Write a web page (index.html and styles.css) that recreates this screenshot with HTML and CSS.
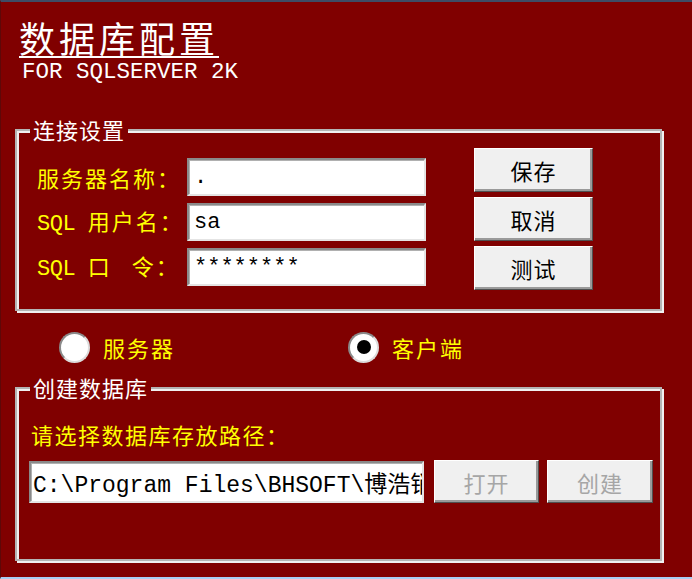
FILE: index.html
```html
<!DOCTYPE html>
<html lang="zh-CN">
<head>
<meta charset="utf-8">
<title>数据库配置</title>
<link rel="stylesheet" href="styles.css">
</head>
<body>
<div class="window">
  <header class="head">
    <h1 class="title">数据库配置</h1>
    <div class="subtitle">FOR SQLSERVER 2K</div>
  </header>

  <section class="group group-conn">
    <span class="legend legend-conn">连接设置</span>
    <div class="conn-body">
      <div class="fields">
        <div class="field-row">
          <label class="label">服务器名称：</label>
          <input class="edit" type="text" value="." readonly>
        </div>
        <div class="field-row">
          <label class="label"><span class="mono">SQL </span>用户名：</label>
          <input class="edit" type="text" value="sa" readonly>
        </div>
        <div class="field-row">
          <label class="label"><span class="mono">SQL </span>口<span class="gap"></span>令：</label>
          <input class="edit" type="text" value="********" readonly>
        </div>
      </div>
      <div class="buttons">
        <button class="btn">保存</button>
        <button class="btn">取消</button>
        <button class="btn">测试</button>
      </div>
    </div>
  </section>

  <div class="radios">
    <div class="radio radio-server">
      <span class="radio-dot"></span>
      <span class="radio-label">服务器</span>
    </div>
    <div class="radio radio-client">
      <span class="radio-dot checked"></span>
      <span class="radio-label">客户端</span>
    </div>
  </div>

  <section class="group group-db">
    <span class="legend legend-db">创建数据库</span>
    <div class="path-label">请选择数据库存放路径：</div>
    <div class="path-row">
      <input class="edit path-edit" type="text" value="C:\Program Files\BHSOFT\博浩销售管理系统\Data" readonly>
      <button class="btn btn-small" disabled>打开</button>
      <button class="btn btn-small btn-create" disabled>创建</button>
    </div>
  </section>
</div>
</body>
</html>
```

FILE: styles.css
```css
html, body {
  margin: 0;
  padding: 0;
  background: #800000;
}

body {
  width: 692px;
  height: 579px;
  overflow: hidden;
  font-family: "Noto Sans CJK SC", "Noto Sans", sans-serif;
}

.window {
  box-sizing: border-box;
  width: 692px;
  height: 579px;
  background: #800000;
  border-top: 2px solid #3e4c66;
  border-bottom: 2px solid #a8cdf2;
  border-left: 1px solid #5e0808;
}

/* header */
.head {
  padding: 21px 0 0 18px;
  color: #fff;
}

.title {
  margin: 0;
  font-family: "Liberation Sans", "Noto Sans CJK SC", sans-serif;
  font-size: 36px;
  line-height: 36px;
  font-weight: 400;
  letter-spacing: 4px;
  text-decoration: underline;
  text-decoration-thickness: 2px;
  text-underline-offset: 3px;
}

.subtitle {
  font-family: "Liberation Mono", monospace;
  font-size: 22.5px;
  line-height: 22px;
  margin-left: 3px;
  margin-top: 2px;
}

/* group boxes */
.group {
  position: relative;
  box-sizing: border-box;
  margin-left: 14px;
  width: 647px;
  border: 2px solid #b4b4b4;
  box-shadow: 2px 2px 0 #f0f0f0, inset 2px 2px 0 #f0f0f0;
}

.legend {
  position: absolute;
  left: 13px;
  top: -15px;
  padding: 0 3px;
  background: #800000;
  color: #fff;
  font-size: 22px;
  line-height: 26px;
}

.legend-conn { letter-spacing: 1px; }
.legend-db { letter-spacing: 1px; }

.group-conn {
  margin-top: 46px;
  height: 182px;
  padding: 17px 0 0 20px;
}

.conn-body {
  display: flex;
  align-items: flex-start;
}

.fields {
  display: flex;
  flex-direction: column;
  gap: 7px;
  padding-top: 10px;
}

.field-row {
  display: flex;
  align-items: center;
  height: 38px;
}

.label {
  width: 150px;
  color: #ffff00;
  font-size: 22px;
  line-height: 30px;
  letter-spacing: 2px;
  white-space: pre;
}

.mono {
  font-family: "Liberation Mono", monospace;
  font-size: 22px;
  letter-spacing: -0.5px;
  white-space: pre;
}

.gap {
  display: inline-block;
  width: 20px;
}

.edit {
  box-sizing: border-box;
  width: 239px;
  height: 38px;
  margin: 0;
  padding: 0 0 0 5px;
  background: #fff;
  border: 2px solid;
  border-color: #8a8a8a #e4e4e4 #e4e4e4 #8a8a8a;
  box-shadow: inset 1px 1px 0 #b0b0b0;
  font-family: "Liberation Mono", "Noto Sans CJK SC", monospace;
  font-size: 22px;
  color: #000;
  outline: none;
}

.buttons {
  display: flex;
  flex-direction: column;
  gap: 5px;
  margin-left: 48px;
}

.btn {
  box-sizing: border-box;
  width: 119px;
  height: 44px;
  margin: 0;
  padding: 0;
  background: #f0f0f0;
  border: 1px solid;
  border-color: #ffffff #505050 #505050 #ffffff;
  box-shadow: inset -2px -2px 0 #9a9a9a;
  font-family: "Noto Sans CJK SC", sans-serif;
  font-size: 22px;
  letter-spacing: 1px;
  color: #000;
  text-align: center;
}

.btn:disabled {
  color: #a6a6a6;
}

/* radios */
.radios {
  display: flex;
  align-items: center;
  height: 30px;
  margin-top: 21px;
  padding-left: 58px;
}

.radio {
  display: flex;
  align-items: center;
  gap: 13px;
}

.radio-client {
  margin-left: 173px;
}

.radio-dot {
  box-sizing: border-box;
  width: 31px;
  height: 31px;
  border-radius: 50%;
  background: #fff;
  border: 2px solid;
  border-color: #8a8a8a #dcdcdc #dcdcdc #8a8a8a;
  display: flex;
  align-items: center;
  justify-content: center;
}

.radio-dot.checked::after {
  content: "";
  width: 14px;
  height: 14px;
  border-radius: 50%;
  background: #000;
}

.radio-label {
  color: #ffff00;
  font-size: 22px;
  letter-spacing: 2px;
  line-height: 30px;
}

/* database group */
.group-db {
  margin-top: 25px;
  height: 174px;
  padding: 31px 0 0 12px;
}

.path-label {
  color: #ffff00;
  font-size: 22px;
  letter-spacing: 1.5px;
  line-height: 28px;
  padding-left: 2px;
}

.path-row {
  display: flex;
  align-items: flex-start;
  margin-top: 12px;
}

.path-edit {
  width: 395px;
  height: 42px;
  padding-left: 2px;
  font-size: 23px;
  margin-top: 1px;
}

.btn-small {
  width: 105px;
  height: 43px;
  margin-left: 10px;
}

.btn-create {
  width: 106px;
  margin-left: 8px;
}
```
